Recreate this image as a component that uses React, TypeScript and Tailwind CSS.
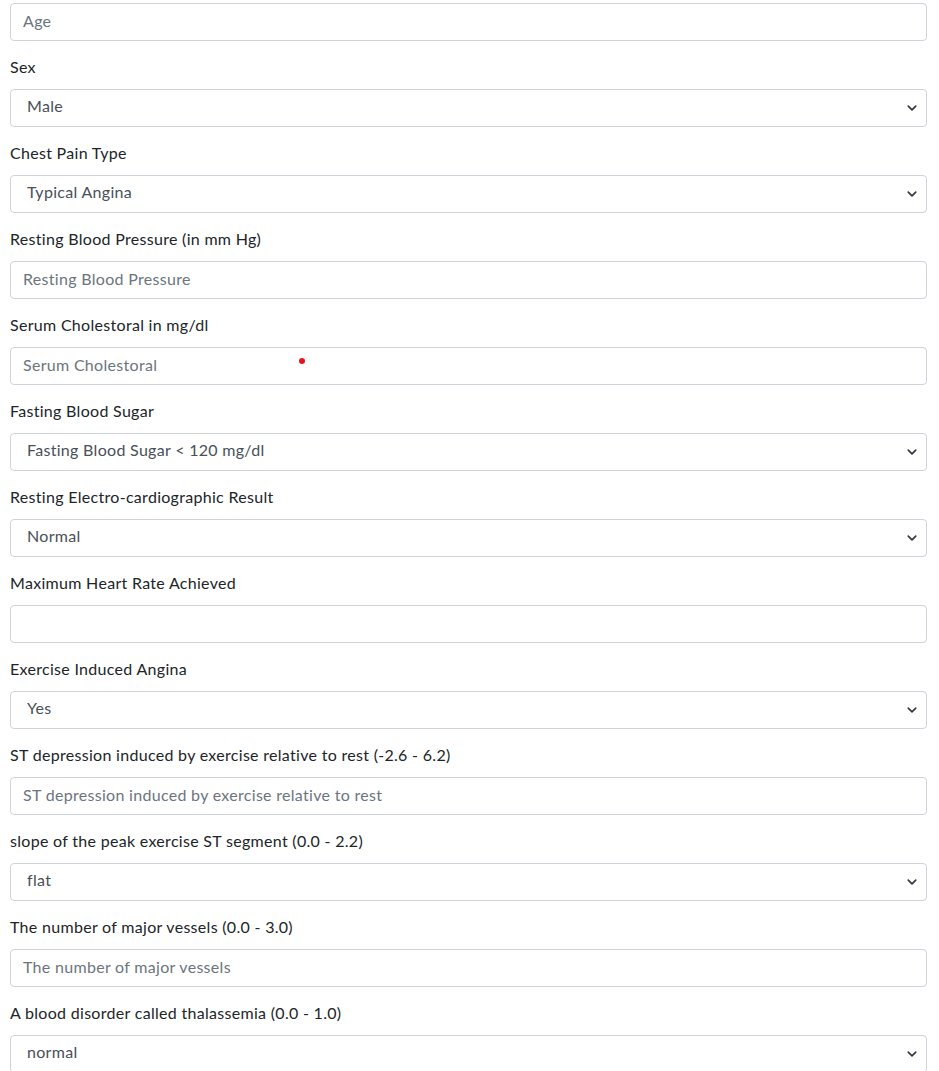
import { ChangeEvent, useState } from "react";

type Field =
  | { kind: "input"; label?: string; placeholder?: string; dot?: boolean }
  | { kind: "select"; label: string; options: string[] };

const fields: Field[] = [
  { kind: "input", placeholder: "Age" },
  { kind: "select", label: "Sex", options: ["Male", "Female"] },
  {
    kind: "select",
    label: "Chest Pain Type",
    options: ["Typical Angina", "Atypical Angina", "Non-anginal Pain", "Asymptomatic"],
  },
  { kind: "input", label: "Resting Blood Pressure (in mm Hg)", placeholder: "Resting Blood Pressure" },
  { kind: "input", label: "Serum Cholestoral in mg/dl", placeholder: "Serum Cholestoral", dot: true },
  {
    kind: "select",
    label: "Fasting Blood Sugar",
    options: ["Fasting Blood Sugar < 120 mg/dl", "Fasting Blood Sugar > 120 mg/dl"],
  },
  {
    kind: "select",
    label: "Resting Electro-cardiographic Result",
    options: ["Normal", "ST-T wave abnormality", "Left ventricular hypertrophy"],
  },
  { kind: "input", label: "Maximum Heart Rate Achieved" },
  { kind: "select", label: "Exercise Induced Angina", options: ["Yes", "No"] },
  {
    kind: "input",
    label: "ST depression induced by exercise relative to rest (-2.6 - 6.2)",
    placeholder: "ST depression induced by exercise relative to rest",
  },
  {
    kind: "select",
    label: "slope of the peak exercise ST segment (0.0 - 2.2)",
    options: ["flat", "upsloping", "downsloping"],
  },
  {
    kind: "input",
    label: "The number of major vessels (0.0 - 3.0)",
    placeholder: "The number of major vessels",
  },
  {
    kind: "select",
    label: "A blood disorder called thalassemia (0.0 - 1.0)",
    options: ["normal", "fixed defect", "reversable defect"],
  },
];

const control =
  "block h-[38px] w-full rounded-[4px] border border-[#ced4da] bg-white px-3 pb-[4px] text-base tracking-[0.3px] text-[#495057] outline-none";

function SelectField({ options }: { options: string[] }) {
  const [value, setValue] = useState(options[0]);
  return (
    <div className="relative">
      <select
        value={value}
        onChange={(e: ChangeEvent<HTMLSelectElement>) => setValue(e.target.value)}
        className={`${control} appearance-none pl-4`}
      >
        {options.map((o) => (
          <option key={o}>{o}</option>
        ))}
      </select>
      <svg
        className="pointer-events-none absolute right-[7px] top-1/2 h-3 w-4 -translate-y-1/2"
        viewBox="0 0 16 16"
        fill="none"
        stroke="#343a40"
        strokeWidth={2.2}
        strokeLinecap="round"
        strokeLinejoin="round"
      >
        <path d="m3 5.5 5 5 5-5" />
      </svg>
    </div>
  );
}

export default function App() {
  return (
    <div
      className="bg-white pb-4 pl-[10px] pr-[12px] pt-[3px] text-[#212529]"
      style={{ fontFamily: "Lato, 'Noto Sans', sans-serif" }}
    >
      {fields.map((f, i) => (
        <div key={i} className="mb-4">
          {f.label && (
            <label className="mb-3 block text-base leading-5 tracking-[0.3px]">{f.label}</label>
          )}
          {f.kind === "select" ? (
            <SelectField options={f.options} />
          ) : (
            <div className="relative">
              <input type="text" placeholder={f.placeholder} className={`${control} placeholder:text-[#6c757d]`} />
              {/* stray red dot from the original capture */}
              {f.dot && (
                <span className="absolute left-[289px] top-[11px] h-[6px] w-[6px] rounded-full bg-[#e8131d]" />
              )}
            </div>
          )}
        </div>
      ))}
    </div>
  );
}
